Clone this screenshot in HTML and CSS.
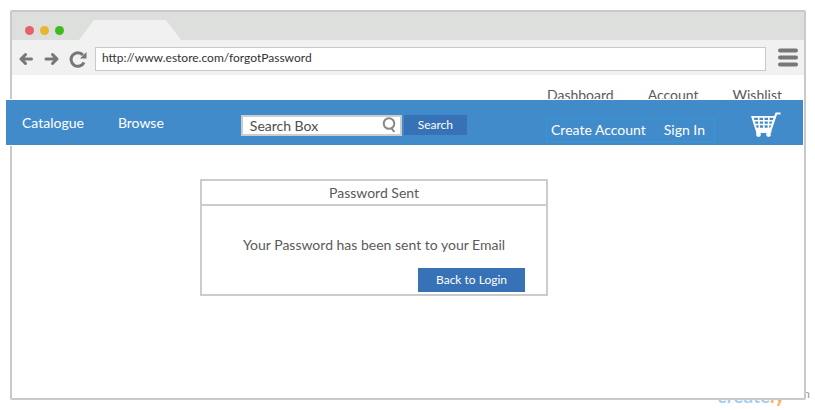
FILE: index.html
```html
<!DOCTYPE html>
<html lang="en">
<head>
<meta charset="utf-8">
<title>Password Sent</title>
<link rel="stylesheet" href="styles.css">
</head>
<body>
<div class="watermark"><span class="brand">create<span class="accent">ly</span></span><span class="domain">.com</span></div>
<div class="browser">
  <div class="tabstrip">
    <span class="dot red"></span><span class="dot amber"></span><span class="dot green"></span>
    <svg class="tab" width="104" height="20" viewBox="0 0 104 20"><path d="M0 20L15 0H87L102 20Z" fill="#f1f1f1"/></svg>
  </div>
  <div class="toolbar">
    <button class="tool" aria-label="Back"><svg width="16" height="14" viewBox="0 0 16 14"><path d="M6.500 2.500L2 7l4.500 4.500M2 7H12.500" /></svg></button>
    <button class="tool" aria-label="Forward"><svg width="16" height="14" viewBox="0 0 16 14"><path d="M8.500 2.500l4.500 4.500-4.500 4.500M12.500 7H2"/></svg></button>
    <button class="tool" aria-label="Reload"><svg width="18" height="18" viewBox="0 0 18 18"><path class="arc" d="M14 5A6.800 6.800 0 1 0 15 12.500"/><path class="head" d="M17.500 2V8.500H11Z"/></svg></button>
    <input class="address" type="text" aria-label="Address" value="http://www.estore.com/forgotPassword">
    <button class="tool menu" aria-label="Menu"><svg width="20" height="19" viewBox="0 0 20 19"><path class="bars" d="M2 2.500H18M2 9.500H18M2 16.500H18"/></svg></button>
  </div>
  <div class="userlinks">
    <a href="#">Dashboard</a><a href="#">Account</a><a href="#">Wishlist</a>
  </div>
  <nav class="navbar">
    <a href="#">Catalogue</a>
    <a class="browse" href="#">Browse</a>
    <form class="search">
      <label class="field">
        <input type="text" aria-label="Search" value="Search Box">
        <svg width="14" height="16" viewBox="0 0 14 16"><circle cx="7" cy="6.500" r="5.300"/><path d="M9 10.500L12.300 15"/></svg>
      </label>
      <button class="primary" type="button">Search</button>
    </form>
    <div class="session"><a href="#">Create Account</a><a href="#">Sign In</a></div>
    <a class="cart" href="#" aria-label="Cart"><svg width="30" height="26" viewBox="0 0 30 26"><path class="basket" fill-rule="evenodd" d="M0 4H23.300L24.600 0.500H29.500V2.400H26L20.900 17.500H4.300ZM2.800 5.800L3.400 8H6.900V5.800ZM8.500 5.800V8H12V5.800ZM13.600 5.800V8H17V5.800ZM18.600 5.800V8H21.700L22.400 5.800ZM3.900 9.500L4.500 11.700H7.200V9.500ZM8.800 9.500V11.700H12V9.500ZM13.600 9.500V11.700H16.800V9.500ZM18.400 9.500V11.700H20.500L21.200 9.500ZM5 13.200L5.700 15.700H7.500V13.200ZM9 13.200V15.700H12V13.200ZM13.600 13.200V15.700H16.600V13.200ZM18.200 13.200V15.700H19.200L20 13.200Z"/><path class="basket" d="M4.500 17H20.800L20.200 21H5.200Z"/><circle cx="7.500" cy="22.500" r="2.400"/><circle cx="17.500" cy="22.500" r="2.400"/></svg></a>
  </nav>
  <main>
    <section class="dialog">
      <h1>Password Sent</h1>
      <p>Your Password has been sent to your Email</p>
      <button class="primary back" type="button">Back to Login</button>
    </section>
  </main>
</div>
</body>
</html>
```
FILE: styles.css
```css
* { box-sizing: border-box; }
body {
  margin: 0;
  padding: 10px 9px 10px 10px;
  background: #fff;
  color: #5a5a5a;
  font: 14px/20px Lato, "Liberation Sans", sans-serif;
}
a { color: inherit; text-decoration: none; }
button, input { font: inherit; margin: 0; border: 0; padding: 0; }
.browser {
  position: relative;
  min-height: calc(100vh - 20px);
  border: 2px solid #c9c9c9;
  border-radius: 2px;
  background: #fff;
}
.tabstrip {
  display: flex;
  align-items: center;
  gap: 6px;
  height: 28px;
  padding: 8px 0 0 13px;
  background: #dcdfdc;
}
.dot { width: 9px; height: 9px; border-radius: 50%; }
.red { background: #e95f6b; }
.amber { background: #ebb42f; }
.green { background: #3bbb1e; }
.tab { margin-left: 9px; }
.toolbar {
  display: flex;
  align-items: center;
  height: 35px;
  padding: 2px 6px 0 7px;
  background: #f1f1f1;
}
.tool { display: flex; background: none; margin-right: 9px; }
.tool path { fill: none; stroke: #777; stroke-width: 3; stroke-linecap: round; stroke-linejoin: round; }
.tool .head { fill: #777; stroke: none; }
.tool .arc { stroke-linecap: butt; }
.tool .bars { stroke-width: 4; }
.address {
  flex: 1;
  min-width: 0;
  height: 24px;
  margin-left: -1px;
  padding: 0 6px 2px;
  border: 1px solid #c9c9c9;
  background: #fff;
  color: #333;
  font-size: 12px;
}
.menu { margin: 0 0 2px 12px; }
.userlinks {
  display: flex;
  justify-content: flex-end;
  gap: 34px;
  height: 24px;
  padding: 10px 22px 0 0;
  overflow: hidden;
}
.navbar {
  display: flex;
  align-items: center;
  height: 47px;
  margin: 0 0 0 -6px;
  padding: 0 22px 0 16px;
  border: solid #fff;
  border-width: 1px 1px 1px 0;
  background: #428bca;
  background-clip: padding-box;
  color: #fff;
}
.browse { margin-left: 34px; }
.search { display: flex; align-items: center; gap: 2px; margin-left: 77px; padding-top: 5px; }
.field {
  display: flex;
  align-items: center;
  width: 161px;
  height: 21px;
  padding: 0 4px 0 7px;
  border: 2px solid #ccc;
  background: #fff;
}
.field input { flex: 1; min-width: 0; height: 17px; padding-top: 1px; background: none; color: #4d4d4d; }
.field svg { fill: none; stroke: #888; stroke-width: 2; }
.primary { height: 20px; width: 63px; background: #3672b5; color: #fff; font-size: 12px; }
.session {
  display: flex;
  gap: 18px;
  height: 24px;
  margin: 14px 36px 0 auto;
  padding: 1px 9px 0 4px;
  border: 1px solid #3399d3;
  line-height: 20px;
}
.cart { display: flex; margin-top: 4px; fill: #fff; }
main { padding: 33px 0 0 188px; }
.dialog {
  display: flex;
  flex-direction: column;
  width: 348px;
  border: 2px solid #ccc;
}
h1 {
  margin: 0;
  height: 25px;
  border-bottom: 2px solid #ccc;
  font-size: 14px;
  font-weight: 400;
  line-height: 23px;
  text-align: center;
}
p { margin: 29px 0 13px; text-align: center; }
.back { align-self: flex-end; width: 107px; height: 24px; margin: 0 21px 2px 0; }
.watermark {
  position: absolute;
  right: 5px;
  top: calc(100vh - 26px);
  display: flex;
  line-height: 24px;
}
.brand { color: #a9cfec; font-size: 19px; font-weight: 700; line-height: 24px; }
.accent { color: #fbb45c; }
.domain { color: #999; font-size: 12px; line-height: 20px; }
```
